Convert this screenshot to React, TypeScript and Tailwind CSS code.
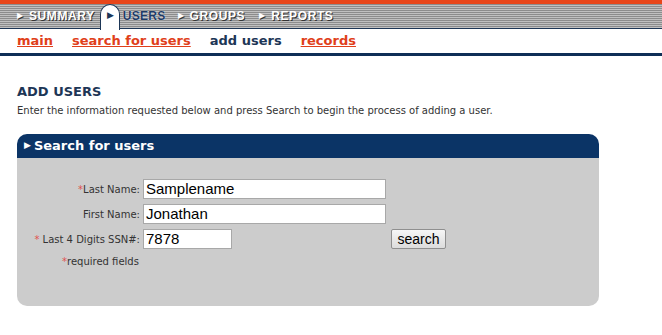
import React from "react";

const NavItem = ({ label }: { label: string }) => (
  <div className="flex items-center gap-[6px] text-white [text-shadow:1px_1px_0_#333]">
    <span className="text-[8px]">▶</span>
    <span className="font-bold text-[12px] tracking-[0.6px]">{label}</span>
  </div>
);

const App = () => {
  return (
    <div className="w-[662px] h-[335px] bg-white font-['DejaVu_Sans',Verdana,sans-serif] text-[#333]">
      {/* top nav */}
      <div className="h-[4px] bg-[#e8461a]"></div>
      <div className="h-[25px] border-b border-[#1d3656] bg-[repeating-linear-gradient(180deg,#8c8c8c_0px,#8c8c8c_1px,#c0c0c0_1px,#c0c0c0_2px)] flex items-end pl-[17px] font-['Liberation_Sans',Arial,sans-serif]">
        <div className="flex items-center h-[24px]">
          <NavItem label="SUMMARY" />
        </div>
        <div className="ml-[5px] w-[20px] h-[26px] -mb-[2px] bg-white border border-b-0 border-[#1d3656] rounded-t-[10px] flex items-start justify-center pt-[6px]">
          <span className="text-[#1d3656] text-[9px] leading-none ml-[1px]">▶</span>
        </div>
        <div className="flex items-center h-[24px] ml-[3px]">
          <span className="font-bold text-[12px] tracking-[0.3px] text-[#1d3b66] [text-shadow:0_0_1px_#fff]">USERS</span>
        </div>
        <div className="flex items-center h-[24px] ml-[12px]">
          <NavItem label="GROUPS" />
        </div>
        <div className="flex items-center h-[24px] ml-[14px]">
          <NavItem label="REPORTS" />
        </div>
      </div>

      {/* sub nav */}
      <div className="h-[27px] border-b-[3px] border-[#0f2f57] flex items-center pl-[17px] gap-[19px] text-[13px] font-bold">
        <a className="text-[#e0401a] underline">main</a>
        <a className="text-[#e0401a] underline">search for users</a>
        <span className="text-[#1d3656]">add users</span>
        <a className="text-[#e0401a] underline">records</a>
      </div>

      {/* content */}
      <div className="px-[17px] pt-[28px]">
        <h1 className="text-[13px] font-bold text-[#1d3656] leading-[16px]">ADD USERS</h1>
        <p className="text-[10px] mt-[4px] leading-[13px]">
          Enter the information requested below and press Search to begin the process of adding a user.
        </p>

        <div className="mt-[17px] w-[582px]">
          <div className="h-[24px] bg-[#0b3466] rounded-t-[10px] flex items-center pl-[7px] text-white font-bold text-[13px]">
            <span className="text-[9px] mr-[3px]">▶</span>
            <span>Search for users</span>
          </div>
          <div className="h-[148px] bg-[#cccccc] rounded-b-[10px] pt-[21px]">
            <div className="grid grid-cols-[123px_auto] gap-x-[3px] gap-y-[5px] text-[10px] items-center">
              <label className="text-right">
                <span className="text-[#e05050]">*</span>Last Name:
              </label>
              <input
                readOnly
                value="Samplename"
                className="w-[243px] h-[20px] bg-white border border-[#a8a8a8] px-[2px] text-[15px] font-['Liberation_Sans',Arial,sans-serif] text-black outline-none"
              />
              <label className="text-right">First Name:</label>
              <input
                readOnly
                value="Jonathan"
                className="w-[243px] h-[20px] bg-white border border-[#a8a8a8] px-[2px] text-[15px] font-['Liberation_Sans',Arial,sans-serif] text-black outline-none"
              />
              <label className="text-right">
                <span className="text-[#e05050]">*</span> Last 4 Digits SSN#:
              </label>
              <div className="flex items-center">
                <input
                  readOnly
                  value="7878"
                  className="w-[89px] h-[20px] bg-white border border-[#a8a8a8] px-[2px] text-[15px] font-['Liberation_Sans',Arial,sans-serif] text-black outline-none"
                />
                <button className="ml-[159px] w-[55px] h-[20px] border border-[#8f8f8f] rounded-[2px] bg-gradient-to-b from-[#f6f6f6] to-[#dcdcdc] text-[14px] font-['Liberation_Sans',Arial,sans-serif] text-black leading-none">
                  search
                </button>
              </div>
              <div className="pl-[45px] text-left">
                <span className="text-[#e05050]">*</span>required fields
              </div>
            </div>
          </div>
        </div>
      </div>
    </div>
  );
};

export default App;
